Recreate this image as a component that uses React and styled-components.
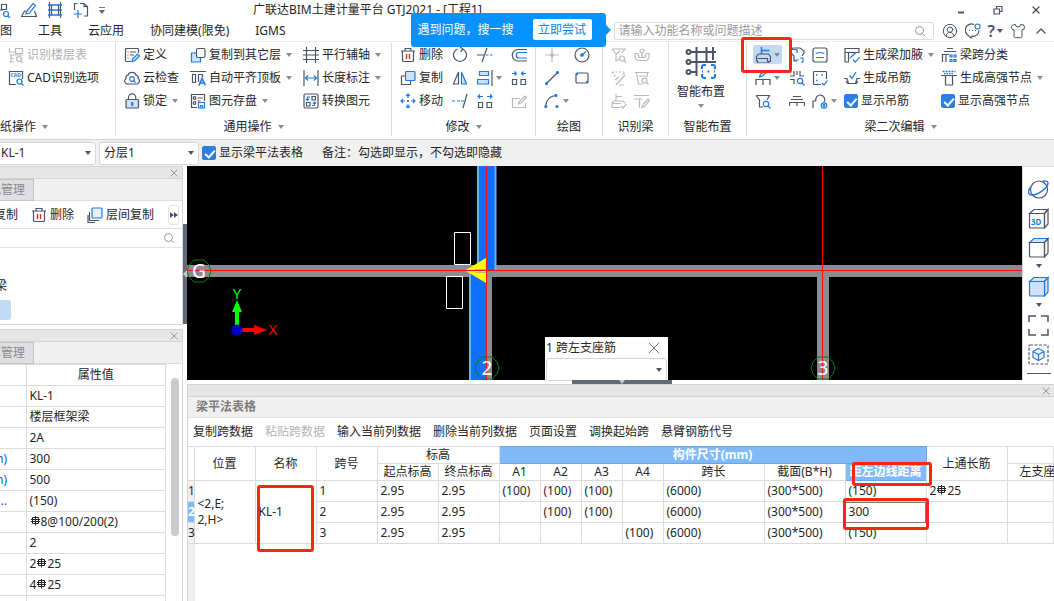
import React, { useState } from 'react';
import styled, { createGlobalStyle, css } from 'styled-components';
import { ChevronUp, CircleUserRound, Search, Shirt, X } from 'lucide-react';

const D = '#4b5568';
const B = '#1f78e6';
const L = '#cfe2fb';
const G = '#b9b9b9';

const GlobalStyle = createGlobalStyle`
  * { box-sizing: border-box; }
  body {
    margin: 0;
    overflow: hidden;
    background: #fff;
  }
  body, button, input, select {
    font-family: 'Noto Sans', 'Noto Sans CJK SC', sans-serif;
    font-size: 12px;
    line-height: 16px;
    color: #262626;
  }
  button { border: 0; padding: 0; background: none; }
`;

const Page = styled.div`
  display: flex;
  flex-direction: column;
  height: 100vh;
  overflow: hidden;
`;

/* ---------- icons ---------- */

const Svg = styled.svg`
  flex: none;
  display: block;
  fill: none;
  stroke: ${D};
  stroke-width: 1.2;
`;

const icons = {
  scan: (
    <>
      <path d="M0 8h8M6.500 2.500h5v5h-5zM0 11.500h5M2.500 8v8M0 15.500h5M2 2.500v4" />
      <circle cx="11" cy="12" r="2.500" stroke={B} />
      <path d="M13 14l2 2" stroke={B} />
    </>
  ),
  pen: (
    <>
      <path d="M5.500 9.500L12 1.500l2.500 1.800L8.500 11l-3.500 1z" stroke={B} />
      <path d="M5 9H3.500l-3 5.500h15L13.500 9" />
    </>
  ),
  rail: (
    <>
      <path d="M2.500 0v16M13.500 0v16" />
      <path d="M1 3h14M1 8h14M1 13h14" stroke={B} strokeWidth="1.6" />
      <path d="M4.500 3v10M11.500 3v10" />
    </>
  ),
  frame: (
    <>
      <path d="M1.500 8V1.500h3M7 1.500h4l3.500 3V14H11M11 1.500v3h3.500" />
      <path d="M5 8v8M1 12h8" stroke={B} />
    </>
  ),
  floors: (
    <g stroke={G}>
      <path d="M1.500 1v4h4M7.500 1.500h7v5h-7zM1.500 8h13M3 8v7M1 15h5M6 11.500h-3M7 5h-2" />
      <circle cx="11" cy="12" r="2.500" />
      <path d="M13 14l2 2" />
    </g>
  ),
  cad: (
    <>
      <path d="M8 14.500H1.500v-13h13V9" />
      <text x="2.500" y="7" fontSize="5" fontWeight="700" fill={B} stroke="none">CAD</text>
      <circle cx="11.500" cy="11.500" r="2.500" stroke={B} />
      <path d="M13.500 13.500l2 2" stroke={B} />
    </>
  ),
  define: (
    <>
      <path d="M14.500 6V2.500a1 1 0 0 0-1-1h-11a1 1 0 0 0-1 1v11a1 1 0 0 0 1 1H7M3.500 5h1M6 5h6M3.500 8h1M6 8h4M3.500 11h1" />
      <path d="M8 14.500l.6-2.400L13.500 7l2 1.800-5 5.200z" stroke={B} fill={L} />
    </>
  ),
  cloud: (
    <>
      <path d="M4 14h8.500a3 3 0 0 0 1.600-5.500 2.500 2.500 0 0 0-2-3.300A4.300 4.300 0 0 0 4 5.200 2.600 2.600 0 0 0 2 8.700 2.900 2.900 0 0 0 4 14z" />
      <circle cx="8" cy="9" r="2.300" stroke={B} />
      <path d="M9.700 10.700l2 2" stroke={B} />
    </>
  ),
  lock: (
    <>
      <rect x="2" y="6.500" width="12.500" height="8.500" rx="1" fill={L} />
      <path d="M4.500 6V4.500a3.600 3.600 0 0 1 7.300 0V6" />
      <path d="M8.200 9v4" stroke={B} strokeWidth="2" />
    </>
  ),
  copyTo: (
    <>
      <path d="M7 6H1.500v9h9v-4.500" fill={L} stroke={B} />
      <rect x="6.500" y="1.500" width="8.500" height="9" rx="1.500" fill="#fff" />
    </>
  ),
  align: (
    <>
      <path d="M0 1.500h16M2.500 4.500h3v8h-3zM8.500 12V4.500h4V7" />
      <path d="M9 15.500L12 8.500l3.500 7M10 13h4" stroke={B} strokeWidth="1.600" />
    </>
  ),
  store: (
    <>
      <path d="M7 14.500H1.500v-13h13V8M7.500 5h5M7.500 8h3" />
      <circle cx="4.500" cy="5" r="1.300" />
      <circle cx="4.500" cy="10" r="1.300" />
      <path d="M8.500 9.500h6v5.500h-6zM10.500 15v-2.500h2V15" stroke={B} />
    </>
  ),
  grid: <path d="M3.500 0v16M12.500 0v16M0 3.500h16M0 8h16M0 12.500h16" />,
  length: (
    <>
      <path d="M1 0v16M15 0v16" />
      <path d="M2.500 8h11M5 5.500L2.500 8 5 10.500M11 5.500L13.500 8 11 10.500" stroke={B} />
    </>
  ),
  convert: (
    <>
      <rect x="1" y="1" width="14" height="14" rx="1.500" />
      <path d="M9 3.500h3.500V7H9zM3.500 9.500H7V13H3.500z" />
      <path d="M7 4H4.500v3.500M3 6l1.500 1.500L6 6M9 12.500h2.500V9M10 10.500L11.500 9l1.500 1.500" stroke={B} />
    </>
  ),
  trash: (
    <>
      <path d="M1 4h14M5 4V1.500h6V4M2.500 4v9.500a1 1 0 0 0 1 1h9a1 1 0 0 0 1-1V4" />
      <path d="M6.500 7v5M9.500 7v5" stroke="#d93025" strokeWidth="1.400" />
    </>
  ),
  copy: (
    <>
      <path d="M5 6H1.500v8.500h9V11" />
      <rect x="5.500" y="1.500" width="9.500" height="9" rx="1" fill={L} stroke={B} />
    </>
  ),
  layers: (
    <>
      <path d="M3 5.500H2.500v8h9V13M1 8v7.500h7" />
      <rect x="5" y="1" width="10" height="10" rx="1" fill="#e6f1fd" stroke={B} />
    </>
  ),
  move: (
    <g stroke={B}>
      <path d="M8 1v4M8 11v4M1 8h4M11 8h4M6 3l2-2 2 2M6 13l2 2 2-2M3 6L1 8l2 2M13 6l2 2-2 2" />
      <path d="M8 7v2M7 8h2" stroke={D} />
    </g>
  ),
  rotate: <path d="M10.500 2A6.500 6.500 0 1 1 5.500 2M8 0l3 2-2.500 2.800" />,
  mirror: (
    <>
      <path d="M6.500 2v12h-5z" />
      <path d="M9.500 2v12h5z" fill={L} stroke={B} />
    </>
  ),
  trimLong: (
    <>
      <path d="M0 8h7M10 1L5 15" />
      <path d="M9 8h2.500M13 8h2.500" stroke={B} />
    </>
  ),
  trim: (
    <>
      <path d="M0 8h3M5 8h3M9 8h3" stroke={B} />
      <path d="M15 1l-4 14" />
    </>
  ),
  alignEdge: (
    <>
      <path d="M2.500 1.500h9v4h-9zM.5 9.500h11v4.500H.5z" fill={L} stroke={B} />
      <path d="M15 0v16" />
    </>
  ),
  merge: (
    <>
      <path d="M1.500 9.500h4v5h-4zM10 9.500h4.500v5H10z" />
      <path d="M1 3.500h4.500M3.500 1.500l2 2-2 2M15 3.500h-4.500M12.500 1.500l-2 2 2 2" stroke={B} />
    </>
  ),
  split: (
    <>
      <path d="M1.500 9.500h4v5h-4zM10 9.500h4.500v5H10z" />
      <path d="M1 3.500h5M3 1.500l-2 2 2 2M15 3.500h-5M13 1.500l2 2-2 2" stroke={B} />
    </>
  ),
  offset: (
    <>
      <path d="M16 2.500H7a5.500 5.500 0 0 0 0 11.500h9" />
      <path d="M16 5.500H8a2.600 2.600 0 0 0 0 5.500h8" stroke={B} />
    </>
  ),
  edit: (
    <g stroke={G}>
      <path d="M9 5.500H1.500v9h13V10" />
      <path d="M7.500 11l.8-2.500L14 3l1.500 1.500-5.500 5.500z" />
    </g>
  ),
  point: (
    <g stroke={G}>
      <path d="M8 1v5M8 10v5M1 8h5M10 8h5" />
      <circle cx="8" cy="8" r="1.300" fill="#999" />
    </g>
  ),
  circle: (
    <>
      <circle cx="8" cy="8" r="7" />
      <circle cx="8" cy="8" r="1.200" fill={B} stroke={B} />
      <path d="M8 8l4-3.500" stroke={B} />
    </>
  ),
  line: (
    <>
      <path d="M3 13L13 3" />
      <circle cx="2.500" cy="13.500" r="1" fill={B} stroke={B} />
      <circle cx="13.500" cy="2.500" r="1" fill={B} stroke={B} />
    </>
  ),
  rect: (
    <>
      <rect x="2" y="3" width="12" height="10" rx="1" />
      <path d="M2 3h2v2H2zM12 11h2v2h-2z" fill={B} stroke="none" />
    </>
  ),
  arc: (
    <>
      <path d="M1.500 14C2 6 6 3 12 2.500" />
      <circle cx="1.800" cy="13.500" r="1" fill={B} stroke={B} />
      <circle cx="12" cy="2.500" r="1" fill={B} stroke={B} />
      <circle cx="13" cy="13.500" r="1" fill={B} stroke={B} />
    </>
  ),
  idCheck: (
    <g stroke={G}>
      <path d="M1 2h13l-3 4M1 2l4 5v7l4-2M5 7l4-3" />
      <circle cx="11" cy="11.500" r="2.500" />
      <path d="M13 13.500l2 2" />
    </g>
  ),
  idMark: (
    <g stroke={G}>
      <circle cx="8" cy="4" r="2" />
      <path d="M1 6.500h3l1 4h6l1-4h3v3a4 4 0 0 1-4 4H5a4 4 0 0 1-4-4zM8 6v4" />
    </g>
  ),
  idEdit: (
    <g stroke={G}>
      <path d="M1 2h13l-3 4M1 2l4 5" strokeDasharray="2 1.500" />
      <path d="M5 15L14 5M4 10l4-3M8 15h5" />
    </g>
  ),
  idView: (
    <g stroke={G}>
      <path d="M1 2.500h14M2.500 2.500l2 11.500H9M13.500 2.500L13 7M5 6h7" />
      <circle cx="10.500" cy="10.500" r="2.500" />
      <path d="M12 12l2.500 2.500" />
    </g>
  ),
  idBeam: (
    <g stroke={G}>
      <path d="M5 1v7M5 3.500h6M9 14.500H1V10l2-2h9l2 2" />
      <path d="M1 10.500h9M10 13l2 2 3.500-4" />
    </g>
  ),
  idPen: (
    <g stroke={G}>
      <path d="M0 2.500h15M0 6h8M5.500 6v8.500" />
      <path d="M8 14.500l1-3L14 6l1.500 1.500-5 6z" />
    </g>
  ),
  beamMark: (
    <>
      <path d="M6.500 0v7M6.500 3.500h8" stroke={B} strokeWidth="1.500" />
      <path d="M1.500 9.500l2-2.500h10l2 2.500v5h-2v1.500h-11V14h-1zM2.500 11.500h10V15" />
    </>
  ),
  beamEdit: (
    <>
      <path d="M1 15V9.500h14V15M8 9.500V15" />
      <path d="M4.500 7l1-3L11 0l1.500 1.500L7.500 6z" stroke={B} fill={L} />
    </>
  ),
  beamFind: (
    <>
      <path d="M1 2.500h13.500L12 7M1 2.500L4.500 7v7H8" />
      <circle cx="11" cy="11" r="2.700" stroke={B} />
      <path d="M13 13l2.500 2.500" stroke={B} />
    </>
  ),
  beamSwap: (
    <>
      <path d="M1 5V3l3-2h7l4 3v2l-2 3M1 5l4 4v5h3" />
      <path d="M1 2.500h7V6M6 13h4M11 11h3v3M12.500 16l2-2" stroke={B} />
    </>
  ),
  beamCross: (
    <>
      <path d="M1 6h4V1M15 6h-4V1M1 9.500h4V14M8 1v4" />
      <circle cx="11" cy="11" r="2.700" stroke={B} />
      <path d="M13 13l2.500 2.500" stroke={B} />
    </>
  ),
  spanOne: <path d="M4 3.500h8M2 6.500h12M.5 13V9.500h15V13M8 9.500V13" />,
  panel: (
    <>
      <rect x="1" y="1" width="14" height="14" rx="2" />
      <path d="M4 6.500q4-2 8 0M4 10.500h8" stroke={B} />
    </>
  ),
  dots: (
    <>
      <path d="M9 14.500H2.500a1 1 0 0 1-1-1v-11a1 1 0 0 1 1-1h11a1 1 0 0 1 1 1V9" />
      <path d="M4 5h1.500M9.500 5H11M4 10.500h1.500" stroke={B} strokeWidth="1.600" />
      <path d="M10 13l2 2 3.500-4.500" stroke={B} />
    </>
  ),
  arch: (
    <>
      <path d="M1 15V8h3M4 8a4.500 4.500 0 1 1 8 1" />
      <circle cx="12" cy="12.500" r="2.700" stroke={B} />
      <circle cx="12" cy="12.500" r=".8" stroke={B} />
    </>
  ),
  haunch: (
    <>
      <path d="M1 5.500v-4h14v4zM1 5.500V15h3.500V5.500" />
      <path d="M6 11l6-5.500M9 12.500l2.500 2.500 4-5" stroke={B} />
    </>
  ),
  hanger: (
    <>
      <path d="M0 8.500h3l1.500 5h7l1.500-5h3M2 11.500l2 2M14 11.500l-2 2" />
      <path d="M5.500 5.500l2.500 3L12 2" stroke={B} />
    </>
  ),
  spanClass: (
    <>
      <path d="M6 1.500h6M3 4.500h12M.5 7.500H8M1.500 7.500V15M5 7.500V15" />
      <path d="M9 8h2v2H9zM13 8h2v2h-2zM9 12.500h2v2H9zM13 12.500h2v2h-2z" stroke={B} />
    </>
  ),
  node: (
    <>
      <path d="M0 5.500h16M4.500 5.500V15h7V5.500" />
      <path d="M1.500 1.500h13" stroke={B} strokeWidth="1.600" strokeDasharray="2 1" />
      <path d="M3 3.700h10" stroke={B} strokeDasharray="1.500 1" />
    </>
  ),
  chat: (
    <>
      <path d="M9 1.500a6 6 0 1 0-5 11.500l2 2 1-1.800a6 6 0 0 0 7-6" />
      <path d="M4 7.500h1M7 7.500h1M10 7.500h1" />
      <circle cx="12.500" cy="3.500" r="2.500" stroke={B} />
    </>
  ),
};

const Icon = ({ name, size = 16 }) => (
  <Svg width={size} height={size} viewBox="0 0 16 16" aria-hidden="true">
    {icons[name]}
  </Svg>
);

const Caret = styled.i`
  flex: none;
  width: 0;
  height: 0;
  border: 3px solid transparent;
  border-top: 4px solid ${(p) => p.$color || '#8a8a8a'};
  border-bottom: 0;
`;

/* ---------- title and menu ---------- */

const TitleBar = styled.header`
  display: flex;
  align-items: center;
  height: 20px;
  flex: none;
`;

const QuickTools = styled.div`
  display: flex;
  align-items: center;
  gap: 10px;
  width: 253px;

  button { display: flex; }
  button:first-child { margin-left: -5px; }
`;

const QuickMore = styled.button`
  padding-top: 2px;
  border-top: 1px solid #777;
`;

const Title = styled.h1`
  flex: 1;
  margin: 0;
  font-size: 12px;
  line-height: 20px;
  font-weight: 400;
`;

const WindowButtons = styled.div`
  display: flex;
  align-items: center;
  gap: 27px;
  padding-right: 12px;

  button { display: flex; }
`;

const MenuBar = styled.nav`
  display: flex;
  align-items: center;
  height: 22px;
  flex: none;
  border-bottom: 1px solid #ececec;
`;

const Menus = styled.div`
  display: flex;
  gap: 26px;
  flex: 1;
`;

const SearchBox = styled.div`
  position: relative;
  width: 320px;
  height: 18px;
  display: flex;
  align-items: center;
  border: 1px solid #dcdcdc;
  border-radius: 2px;
  color: #999;

  input {
    flex: 1;
    min-width: 0;
    height: 16px;
    padding: 0 4px;
    border: 0;
    outline: 0;
    background: none;
  }
  input::placeholder { color: #999; }
  svg { margin-right: 7px; }
`;

const Callout = styled.div`
  position: absolute;
  right: calc(100% + 9px);
  bottom: -8px;
  display: flex;
  align-items: center;
  justify-content: space-between;
  width: 195px;
  height: 34px;
  padding: 0 14px 0 7px;
  border-radius: 3px;
  background: #0792ff;
  color: #fff;
  white-space: nowrap;

  &::after {
    content: '';
    position: absolute;
    left: 100%;
    top: 12px;
    border: 5px solid transparent;
    border-left-color: #0792ff;
    border-right: 0;
  }
  button {
    width: 59px;
    height: 21px;
    border-radius: 2px;
    background: #fff;
    color: #0b83ea;
  }
`;

const UserTools = styled.div`
  display: flex;
  align-items: center;
  gap: 7px;
  padding: 0 5px 0 8px;
  color: ${D};

  button {
    display: flex;
    align-items: center;
    gap: 2px;
    color: ${D};
  }
  b { font-size: 16px; font-weight: 600; }
`;

/* ---------- ribbon ---------- */

const Ribbon = styled.section`
  display: flex;
  flex: none;
  height: 98px;
  padding-top: 1px;
  border-bottom: 1px solid #d3d3d3;
`;

const GroupBox = styled.div`
  display: flex;
  flex-direction: column;
  justify-content: space-between;
  flex: ${(p) => (p.$grow ? '1' : 'none')};
  width: ${(p) => (p.$width ? `${p.$width}px` : 'auto')};
  margin-bottom: 3px;
  border-right: ${(p) => (p.$grow ? '0' : '1px solid #dcdcdc')};
`;

const Columns = styled.div`
  display: flex;
  gap: ${(p) => p.$gap || 7}px;
  padding-left: 8px;
`;

const Column = styled.div`
  display: flex;
  flex-direction: column;
  align-items: flex-start;
`;

const GroupLabel = styled.div`
  display: flex;
  align-items: center;
  justify-content: ${(p) => (p.$start ? 'flex-start' : 'center')};
  gap: 6px;
  height: 18px;
`;

const ToolButton = styled.button`
  display: flex;
  align-items: center;
  gap: 3px;
  height: 23px;
  white-space: nowrap;
  color: ${(p) => (p.$muted ? '#b0b0b0' : 'inherit')};
  ${(p) =>
    p.$active &&
    css`
      position: relative;
      height: 19px;
      margin: 2px 0 2px -2px;
      padding: 0 2px;
      border-radius: 2px;
      background: #c2d9f2;
    `}

  ${Caret} { margin-left: ${(p) => (p.$labelled ? 2 : 0)}px; }
`;

const BigButton = styled.button`
  display: flex;
  flex-direction: column;
  align-items: center;
  gap: 4px;
  padding-top: 3px;
`;

const Mark = styled.span`
  position: absolute;
  inset: ${(p) => p.$inset};
  border: 3px solid #fc2414;
  border-radius: 3px;
  pointer-events: none;
`;

const Check = styled.label`
  display: flex;
  align-items: center;
  gap: 3px;
  height: 23px;
  white-space: nowrap;

  input {
    appearance: none;
    position: relative;
    width: 14px;
    height: 14px;
    margin: 0;
    border: 1px solid #2a7fe0;
    border-radius: 2px;
    background: #fff;
  }
  input:checked { background: #2a7fe0; }
  input:checked::after {
    content: '';
    position: absolute;
    left: 4px;
    top: 1px;
    width: 4px;
    height: 8px;
    border: solid #fff;
    border-width: 0 2px 2px 0;
    transform: rotate(42deg);
  }
`;

const Tool = ({ icon, label, caret, muted, active, children }) => (
  <ToolButton
    type="button"
    aria-label={label || icon}
    $muted={muted}
    $active={active}
    $labelled={!!label}
  >
    <Icon name={icon} />
    {label}
    {caret && <Caret />}
    {children}
  </ToolButton>
);

const Group = ({ label, caret = true, width, grow, gap, start, children }) => (
  <GroupBox $width={width} $grow={grow}>
    <Columns $gap={gap}>{children}</Columns>
    <GroupLabel $start={start}>
      {label}
      {caret && <Caret />}
    </GroupLabel>
  </GroupBox>
);

const ToolColumn = ({ tools }) => (
  <Column>
    {tools.map((tool) => (
      <Tool key={tool.icon} {...tool} />
    ))}
  </Column>
);

const Checkbox = ({ label }) => {
  const [on, setOn] = useState(true);
  return (
    <Check>
      <input type="checkbox" checked={on} onChange={() => setOn(!on)} />
      {label}
    </Check>
  );
};

/* ---------- option bar ---------- */

const OptionBar = styled.div`
  display: flex;
  align-items: center;
  flex: none;
  height: 26px;
  gap: 3px;
  background: #f0f0f0;

  > label { margin-right: 16px; }
`;

const SelectWrap = styled.div`
  position: relative;
  display: flex;
  align-items: center;
  width: ${(p) => p.$width};
  margin-left: ${(p) => p.$shift || 0}px;

  select {
    appearance: none;
    width: 100%;
    height: 23px;
    padding: 0 4px;
    border: 1px solid #d6d6d6;
    border-radius: 3px;
    background: #fff;
    outline: 0;
  }
  ${Caret} {
    position: absolute;
    right: 5px;
    pointer-events: none;
  }
`;

const Select = ({ label, options, width, shift }) => (
  <SelectWrap $width={width} $shift={shift}>
    <select aria-label={label}>
      {options.map((o) => (
        <option key={o}>{o}</option>
      ))}
    </select>
    <Caret $color={D} />
  </SelectWrap>
);

/* ---------- side panels ---------- */

const Workspace = styled.div`
  display: flex;
  flex: 1;
  min-height: 0;
`;

const Sidebar = styled.aside`
  display: flex;
  flex-direction: column;
  gap: 4px;
  width: 183px;
  flex: none;
  overflow: hidden;
`;

const SidePanel = styled.section`
  display: flex;
  flex-direction: column;
  flex: ${(p) => (p.$fill ? '1' : 'none')};
  border: solid #d4d4d4;
  border-width: 1px 1px 1px 0;
`;

const PanelBar = styled.div`
  display: flex;
  align-items: center;
  justify-content: flex-end;
  flex: none;
  height: 12px;
  padding-right: 2px;
  border-bottom: 1px solid #d4d4d4;
  background: #e6e6e6;
  color: #999;

  button { display: flex; color: inherit; }
`;

const Tabs = styled.div`
  flex: none;
  height: 22px;
  border-bottom: 1px solid #dcdcdc;
  background: #f0f0f0;
`;

const Tab = styled.button`
  display: flex;
  align-items: center;
  justify-content: flex-end;
  width: 34px;
  height: 22px;
  padding-right: 8px;
  overflow: hidden;
  border: 1px solid #c4c4c8;
  border-left: 0;
  background: #dfdfe2;
  color: #8a8a8a;
  white-space: nowrap;
`;

const PanelTools = styled.div`
  display: flex;
  align-items: center;
  height: 28px;
  gap: 13px;
  border-bottom: 1px solid #e2e2e2;

  button:first-child { margin-left: -6px; }
`;

const MoreButton = styled.button`
  width: 11px;
  height: 20px;
  margin-left: 1px;
  border: 1px solid #e2e2e2;
  border-radius: 3px;
  display: flex;
  align-items: center;
  justify-content: center;
`;

const PanelSearch = styled.label`
  display: flex;
  align-items: center;
  height: 19px;
  padding-right: 7px;
  border-bottom: 1px solid #e2e2e2;
  color: #999;

  input {
    flex: 1;
    min-width: 0;
    border: 0;
    outline: 0;
    height: 16px;
  }
`;

const Tree = styled.div`
  height: 76px;
  padding-top: 28px;

  span {
    display: block;
    margin: 0 0 4px -5px;
    line-height: 20px;
  }
  i {
    display: block;
    width: 11px;
    height: 20px;
    border-radius: 0 3px 3px 0;
    background: #c2d9f2;
  }
`;

const PropArea = styled.div`
  display: flex;
  flex: 1;
  min-height: 0;
  overflow: hidden;
  gap: 5px;
`;

const PropTable = styled.table`
  width: 166px;
  table-layout: fixed;
  border-collapse: collapse;
  align-self: flex-start;

  th, td {
    height: 21px;
    padding: 0 3px;
    border: 1px solid #dcdcdc;
    font-weight: 400;
    white-space: nowrap;
    overflow: hidden;
  }
  td:first-child, th:first-child {
    border-left: 0;
    padding: 0;
    color: #1a53e8;
  }
  tr > :first-child div {
    display: flex;
    justify-content: flex-end;
    width: 7px;
    height: 16px;
    overflow: hidden;
  }
`;

const ScrollThumb = styled.div`
  width: 8px;
  height: 158px;
  margin-top: 14px;
  border-radius: 4px;
  background: #cbcbcb;
`;

const Splitter = styled.div`
  width: 4px;
  flex: none;
  padding-top: 58px;

  div {
    display: flex;
    align-items: center;
    height: 100px;
    background: #5f6b76;
  }
  i {
    border: 4px solid transparent;
    border-left: 0;
    border-right: 4px solid #c5cbd0;
  }
`;

/* ---------- drawing ---------- */

const Main = styled.main`
  display: flex;
  flex-direction: column;
  flex: 1;
  min-width: 0;
`;

const ViewRow = styled.div`
  display: flex;
  flex: none;
  height: 214px;
`;

const Viewport = styled.div`
  position: relative;
  flex: 1;
  min-width: 0;
  background: #000;

  > svg { display: block; width: 100%; height: 100%; }
`;

const FloatBox = styled.div`
  position: absolute;
  left: 358px;
  bottom: -1px;
  width: 123px;
  height: 44px;
  padding: 0 1px;
  background: #fff;
`;

const FloatHead = styled.div`
  display: flex;
  align-items: center;
  justify-content: space-between;
  height: 21px;
  padding-right: 3px;

  button { display: flex; color: #777; }
`;

const Handle = styled.div`
  display: flex;
  justify-content: center;
  position: relative;
  width: 100px;
  height: 4px;
  flex: none;
  margin-left: 385px;
  background: #5f6b76;
`;

const ViewTools = styled.div`
  display: flex;
  flex-direction: column;
  align-items: center;
  width: 32px;
  flex: none;
  padding-top: 12px;
  gap: 8px;
  overflow: hidden;
  border: solid #dcdcdc;
  border-width: 1px 0 0 1px;

  button {
    display: flex;
    flex-direction: column;
    align-items: center;
    gap: 6px;
  }
  hr { width: 24px; margin: 0; border: 0; border-top: 1px solid #555; flex: none; }
`;

const Cube = ({ top, front, color = D, children }) => (
  <Svg width="21" height="21" viewBox="0 0 21 21" stroke={color}>
    <path d="M1.500 5.500L6 1.500h14l-3.500 4z" fill={top} style={{ stroke: top ? B : color }} />
    <path d="M16.500 5.500l3.500-4v14.500l-3.500 4z" fill={front} style={{ stroke: color }} />
    <rect x="1.500" y="5.500" width="15" height="14.500" rx="1" fill={front} style={{ stroke: color }} />
    {children}
  </Svg>
);

const Bubble = ({ x, y, text }) => (
  <g>
    <path
      d={`M${x - 5} ${y - 11}h10l5 5l2 6l-2 6l-5 5h-10l-5-5l-2-6l2-6z`}
      fill="none"
      stroke="#0a7a0a"
    />
    <text x={x} y={y + 7} textAnchor="middle" fill="#fff" fontSize="19">
      {text}
    </text>
  </g>
);

const Drawing = () => (
  <svg viewBox="0 0 835 214" preserveAspectRatio="xMinYMin slice" fontFamily="'Noto Sans', sans-serif">
    <path d="M0 99h835v12H0zM288 105h17v109h-17zM630 105h12v109h-12z" fill="#8c8c8c" />
    <path d="M290 0h19v104h-19zM282 105h17v109h-17z" fill="#0f6fff" />
    <path d="M291 0v104M308.500 0v104M283 105v109" stroke="#74aaff" strokeWidth="2" />
    <path d="M278 104.500L299 92v25z" fill="#ff0" />
    <path d="M288 103.500h11M288 106.500h11" stroke="#b8bc60" />
    <path d="M0 104.500h835M299.500 0v214M635.500 0v214" stroke="#ff0a0a" />
    <path d="M267.500 66.500h16v32h-16zM259.500 110.500h16v32h-16z" stroke="#fff" fill="#000" />
    <Bubble x={12} y={105} text="G" />
    <Bubble x={300} y={202} text="2" />
    <Bubble x={636} y={202} text="3" />
    <path d="M48 162v-24h4v24z" fill="#0f0" />
    <path d="M50 134l5 12H45z" fill="#0f0" />
    <path d="M54 162h16v4H54z" fill="#f00" />
    <path d="M67 159l13 5-13 5z" fill="#f00" />
    <circle cx="50" cy="164" r="5.500" fill="#0000c8" />
    <text x="50" y="133" textAnchor="middle" fontSize="15" fill="#0f0">Y</text>
    <text x="86" y="169" textAnchor="middle" fontSize="15" fill="#f00">X</text>
  </svg>
);

/* ---------- beam table ---------- */

const BeamPanel = styled.section`
  display: flex;
  flex-direction: column;
  flex: 1;
  min-height: 0;
  overflow: hidden;
  border: solid #d4d4d4;
  border-width: 1px 0 0 1px;
`;

const BeamTitle = styled.h2`
  flex: none;
  height: 21px;
  margin: 0;
  padding-left: 8px;
  border-bottom: 1px solid #e2e2e2;
  background: #f0f0f0;
  color: #7c7c7c;
  font-size: 12px;
  font-weight: 600;
  line-height: 20px;
`;

const BeamTools = styled.div`
  display: flex;
  align-items: center;
  gap: 12px;
  flex: none;
  height: 28px;
  padding-left: 5px;

  button:disabled { color: #b4b4b4; }
`;

const BeamArea = styled.div`
  flex: 1;
  background: linear-gradient(to right, #f0f0f0 7px, #fff 7px);
`;

const BeamTable = styled.table`
  width: 100%;
  table-layout: fixed;
  border-collapse: collapse;
  background: #fff;

  th, td {
    padding: 0;
    border: 1px solid #dcdcdc;
    font-weight: 400;
    text-align: left;
    white-space: nowrap;
  }
  td { height: 21px; padding-left: 3px; }
  thead th { height: 17px; line-height: 16px; text-align: center; }
  tr > th:first-child { border-left: 0; }
`;

const Picked = styled.th`
  && {
    position: relative;
    border-color: #6aa5e8;
    background: #80bafb;
    color: #fff;
    font-weight: 700;
  }
`;

const RowNo = styled.th`
  && {
    background: ${(p) => (p.$on ? '#80bafb' : '#f0f0f0')};
    color: ${(p) => (p.$on ? '#fff' : 'inherit')};
    font-weight: ${(p) => (p.$on ? 700 : 400)};
  }
`;

const CutHead = styled.th`
  && {
    padding-left: 12px;
    text-align: left;
  }
`;

const MarkedCell = styled.td`
  && {
    position: relative;
    ${(p) => p.$edit && 'outline: 1px solid #808080; outline-offset: -1px;'}
  }
`;

const Rebar = styled.svg`
  width: 9px;
  height: 10px;
  margin: 0 1px;
  vertical-align: 0;
  fill: none;
  stroke: #262626;
`;

const RebarSign = () => (
  <Rebar viewBox="0 0 9 10" role="img" aria-label="HRB400">
    <path d="M4.500 0v9.500M1.500 1.500h6v6h-6zM0 3.500h9M0 5.500h9" />
  </Rebar>
);

const properties = [
  ['', 'KL-1'],
  ['', '楼层框架梁'],
  ['', '2A'],
  ['m)', '300'],
  ['m)', '500'],
  ['...', '(150)'],
  ['', <><RebarSign />8@100/200(2)</>],
  ['', '2'],
  ['', <>2<RebarSign />25</>],
  ['', <>4<RebarSign />25</>],
  ['', ''],
];

const spans = [
  { no: 1, a: ['(100)', '(100)', '(100)', ''], edge: '(150)', bar: <>2<RebarSign />25</> },
  { no: 2, a: ['', '(100)', '(100)', ''], edge: '300', bar: '' },
  { no: 3, a: ['', '', '', '(100)'], edge: '(150)', bar: '' },
];

const columnWidths = [6, 61, 61, 61, 61, 61, 41, 41, 41, 41, 101, 81, 81, 81];

const SpanTable = () => (
  <BeamTable>
    <colgroup>
      {columnWidths.map((w, i) => (
        <col key={i} style={{ width: w }} />
      ))}
      <col />
    </colgroup>
    <thead>
      <tr>
        <th rowSpan={2} />
        <th rowSpan={2}>位置</th>
        <th rowSpan={2}>名称</th>
        <th rowSpan={2}>跨号</th>
        <th colSpan={2}>标高</th>
        <Picked colSpan={7}>构件尺寸(mm)</Picked>
        <th rowSpan={2}>上通长筋</th>
        <th />
      </tr>
      <tr>
        <th>起点标高</th>
        <th>终点标高</th>
        <th>A1</th>
        <th>A2</th>
        <th>A3</th>
        <th>A4</th>
        <th>跨长</th>
        <th>截面(B*H)</th>
        <Picked>
          距左边线距离
          <Mark $inset="-2px -6px -6px 6px" />
        </Picked>
        <CutHead>左支座</CutHead>
      </tr>
    </thead>
    <tbody>
      {spans.map((s) => (
        <tr key={s.no}>
          <RowNo scope="row" $on={s.no === 2}>{s.no}</RowNo>
          {s.no === 1 && (
            <>
              <td rowSpan={3}>&lt;2,E;<br />2,H&gt;</td>
              <MarkedCell rowSpan={3}>
                KL-1
                <Mark $inset="4px 2px -9px 1px" />
              </MarkedCell>
            </>
          )}
          <td>{s.no}</td>
          <td>2.95</td>
          <td>2.95</td>
          {s.a.map((v, i) => (
            <td key={i}>{v}</td>
          ))}
          <td>(6000)</td>
          <td>(300*500)</td>
          {s.no === 2 ? (
            <MarkedCell $edit>
              {s.edge}
              <Mark $inset="-4px -3px -8px -3px" />
            </MarkedCell>
          ) : (
            <td>{s.edge}</td>
          )}
          <td>{s.bar}</td>
          <td />
        </tr>
      ))}
    </tbody>
  </BeamTable>
);

/* ---------- page ---------- */

const Header = () => (
  <>
    <TitleBar>
      <QuickTools>
        {['scan', 'pen', 'rail', 'frame'].map((name) => (
          <button type="button" key={name} aria-label={name}>
            <Icon name={name} />
          </button>
        ))}
        <QuickMore type="button" aria-label="more"><Caret $color="#666" /></QuickMore>
      </QuickTools>
      <Title>广联达BIM土建计量平台 GTJ2021 - [工程1]</Title>
      <WindowButtons>
        <button type="button" aria-label="minimize">
          <Svg width="10" height="10"><path d="M2 7.500h6" strokeWidth="2" /></Svg>
        </button>
        <button type="button" aria-label="restore">
          <Svg width="10" height="10"><path d="M1 4h5.500v5H1zM3.500 4V1.500H9V6.500H6.500" /></Svg>
        </button>
        <button type="button" aria-label="close">
          <X size={12} color="#444" strokeWidth={2.400} />
        </button>
      </WindowButtons>
    </TitleBar>
    <MenuBar>
      <Menus>
        {['图', '工具', '云应用', '协同建模(限免)', 'IGMS'].map((m) => (
          <button type="button" key={m}>{m}</button>
        ))}
      </Menus>
      <SearchBox>
        <input aria-label="search" placeholder="请输入功能名称或问题描述" />
        <Search size={12} />
        <Callout>
          遇到问题，搜一搜
          <button type="button">立即尝试</button>
        </Callout>
      </SearchBox>
      <UserTools>
        <button type="button" aria-label="account"><CircleUserRound size={16} strokeWidth={1.500} /></button>
        <button type="button" aria-label="messages"><Icon name="chat" /></button>
        <button type="button" aria-label="help"><b>?</b><Caret $color={D} /></button>
        <button type="button" aria-label="skin"><Shirt size={16} strokeWidth={1.500} /></button>
        <button type="button" aria-label="collapse"><ChevronUp size={16} strokeWidth={2} /></button>
      </UserTools>
    </MenuBar>
  </>
);

const RibbonTools = () => (
  <Ribbon>
    <Group label="纸操作" width={116} start>
      <ToolColumn
        tools={[
          { icon: 'floors', label: '识别楼层表', muted: true },
          { icon: 'cad', label: 'CAD识别选项' },
        ]}
      />
    </Group>
    <Group label="通用操作" width={276} gap={11}>
      <ToolColumn
        tools={[
          { icon: 'define', label: '定义' },
          { icon: 'cloud', label: '云检查' },
          { icon: 'lock', label: '锁定', caret: true },
        ]}
      />
      <ToolColumn
        tools={[
          { icon: 'copyTo', label: '复制到其它层', caret: true },
          { icon: 'align', label: '自动平齐顶板', caret: true },
          { icon: 'store', label: '图元存盘', caret: true },
        ]}
      />
      <ToolColumn
        tools={[
          { icon: 'grid', label: '平行辅轴', caret: true },
          { icon: 'length', label: '长度标注', caret: true },
          { icon: 'convert', label: '转换图元' },
        ]}
      />
    </Group>
    <Group label="修改" width={144} gap={9}>
      <ToolColumn
        tools={[
          { icon: 'trash', label: '删除' },
          { icon: 'copy', label: '复制' },
          { icon: 'move', label: '移动' },
        ]}
      />
      <ToolColumn tools={[{ icon: 'rotate' }, { icon: 'mirror' }, { icon: 'trim' }]} />
      <ToolColumn tools={[{ icon: 'trimLong' }, { icon: 'alignEdge', caret: true }, { icon: 'split' }]} />
      <ToolColumn tools={[{ icon: 'offset' }, { icon: 'merge' }, { icon: 'edit' }]} />
    </Group>
    <Group label="绘图" caret={false} width={67} gap={5}>
      <ToolColumn tools={[{ icon: 'point' }, { icon: 'line' }, { icon: 'arc', caret: true }]} />
      <ToolColumn tools={[{ icon: 'circle' }, { icon: 'rect' }]} />
    </Group>
    <Group label="识别梁" caret={false} width={66}>
      <ToolColumn tools={[{ icon: 'idCheck' }, { icon: 'idEdit' }, { icon: 'idBeam' }]} />
      <ToolColumn tools={[{ icon: 'idMark' }, { icon: 'idView' }, { icon: 'idPen' }]} />
    </Group>
    <Group label="智能布置" caret={false} width={78}>
      <BigButton type="button">
        <Svg width="34" height="34" viewBox="0 0 34 34">
          <g strokeWidth="2">
            <path d="M6 6h26M6 16h26M6 26h7M12.500 1v29M22.500 1v15M29 1v13" />
            <circle cx="4.500" cy="6" r="2" />
            <circle cx="4.500" cy="16" r="2" />
            <circle cx="4.500" cy="26" r="2" />
            <path
              d="M18 23v-2a2 2 0 0 1 2-2h2M27 19h2a2 2 0 0 1 2 2v2M31 28v2a2 2 0 0 1-2 2h-2M22 32h-2a2 2 0 0 1-2-2v-2M23.500 25.500h2M18 25.500h1M30 25.500h1"
              stroke={B}
            />
          </g>
        </Svg>
        智能布置
        <Caret />
      </BigButton>
    </Group>
    <Group label="梁二次编辑" grow>
      <Column>
        <Tool icon="beamMark" caret active>
          <Mark $inset="-8px -10px -9px -12px" />
        </Tool>
        <Tool icon="beamEdit" caret />
        <Tool icon="beamFind" />
      </Column>
      <ToolColumn tools={[{ icon: 'beamSwap' }, { icon: 'beamCross' }, { icon: 'spanOne' }]} />
      <ToolColumn tools={[{ icon: 'panel' }, { icon: 'dots' }, { icon: 'arch', caret: true }]} />
      <Column>
        <Tool icon="haunch" label="生成梁加腋" caret />
        <Tool icon="hanger" label="生成吊筋" />
        <Checkbox label="显示吊筋" />
      </Column>
      <Column>
        <Tool icon="spanClass" label="梁跨分类" />
        <Tool icon="node" label="生成高强节点" caret />
        <Checkbox label="显示高强节点" />
      </Column>
    </Group>
  </Ribbon>
);

const Side = () => (
  <Sidebar>
    <SidePanel>
      <PanelBar><button type="button" aria-label="close"><X size={12} /></button></PanelBar>
      <Tabs><Tab type="button">纸管理</Tab></Tabs>
      <PanelTools>
        <button type="button">复制</button>
        <Tool icon="trash" label="删除" />
        <Tool icon="layers" label="层间复制" />
        <MoreButton type="button" aria-label="more">
          <Svg width="8" height="6"><path d="M0 0l4 3-4 3zM4 0l4 3-4 3z" fill={D} stroke="none" /></Svg>
        </MoreButton>
      </PanelTools>
      <PanelSearch>
        <input aria-label="filter" />
        <Search size={12} />
      </PanelSearch>
      <Tree>
        <span>梁</span>
        <i />
      </Tree>
    </SidePanel>
    <SidePanel $fill>
      <PanelBar><button type="button" aria-label="close"><X size={12} /></button></PanelBar>
      <Tabs><Tab type="button">库管理</Tab></Tabs>
      <PropArea>
        <PropTable>
          <colgroup>
            <col style={{ width: 26 }} />
            <col />
          </colgroup>
          <thead>
            <tr><th /><th>属性值</th></tr>
          </thead>
          <tbody>
            {properties.map(([name, value], i) => (
              <tr key={i}>
                <td><div>{name}</div></td>
                <td>{value}</td>
              </tr>
            ))}
          </tbody>
        </PropTable>
        <ScrollThumb />
      </PropArea>
    </SidePanel>
  </Sidebar>
);

const ViewToolbar = () => (
  <ViewTools>
    <button type="button" aria-label="orbit">
      <Svg width="21" height="21" viewBox="0 0 21 21">
        <circle cx="11" cy="10.500" r="8.500" />
        <path d="M3 8C-1 12 0 16 4 16c6 0 16-7 16-12 0-2-3-2.500-6-1.500" stroke={B} strokeWidth="1.500" />
      </Svg>
    </button>
    <button type="button" aria-label="3d">
      <Cube><text x="3" y="17" fontSize="8" fontWeight="700" fill={B} stroke="none">3D</text></Cube>
    </button>
    <button type="button" aria-label="top view"><Cube top={L} /><Caret $color={D} /></button>
    <button type="button" aria-label="solid"><Cube top={L} front={L} color={B} /><Caret $color={D} /></button>
    <button type="button" aria-label="fit">
      <Svg width="21" height="21" viewBox="0 0 21 21">
        <path d="M1 7V1h7M13 1h7v6M20 14v6h-7M8 20H1v-6" strokeWidth="1.500" />
      </Svg>
    </button>
    <button type="button" aria-label="isolate">
      <Svg width="21" height="21" viewBox="0 0 21 21">
        <rect x="1" y="1" width="19" height="19" rx="1" strokeDasharray="3 1.500" />
        <path d="M10.500 4.500l5.500 3v6l-5.500 3-5.500-3v-6zM5 7.500l5.500 3 5.500-3M10.500 10.500v6" stroke={B} />
      </Svg>
    </button>
    <hr />
    <Svg width="21" height="21"><rect x="1" y="1" width="19" height="19" rx="1" /></Svg>
  </ViewTools>
);

const App = () => (
  <Page>
    <GlobalStyle />
    <Header />
    <RibbonTools />
    <OptionBar>
      <Select label="component" options={['KL-1']} width="100px" shift={-4} />
      <Select label="layer" options={['分层1']} width="100px" />
      <Checkbox label="显示梁平法表格" />
      <span>备注：勾选即显示，不勾选即隐藏</span>
    </OptionBar>
    <Workspace>
      <Side />
      <Splitter><div><i /></div></Splitter>
      <Main>
        <ViewRow>
          <Viewport>
            <Drawing />
            <FloatBox>
              <FloatHead>
                1 跨左支座筋
                <button type="button" aria-label="close"><X size={20} strokeWidth={1.200} /></button>
              </FloatHead>
              <Select label="rebar" options={['']} width="100%" />
            </FloatBox>
          </Viewport>
          <ViewToolbar />
        </ViewRow>
        <Handle><Caret $color="#c5cbd0" /></Handle>
        <BeamPanel>
          <PanelBar><button type="button" aria-label="close"><X size={12} /></button></PanelBar>
          <BeamTitle>梁平法表格</BeamTitle>
          <BeamTools>
            <button type="button">复制跨数据</button>
            <button type="button" disabled>粘贴跨数据</button>
            <button type="button">输入当前列数据</button>
            <button type="button">删除当前列数据</button>
            <button type="button">页面设置</button>
            <button type="button">调换起始跨</button>
            <button type="button">悬臂钢筋代号</button>
          </BeamTools>
          <BeamArea><SpanTable /></BeamArea>
        </BeamPanel>
      </Main>
    </Workspace>
  </Page>
);

export default App;
